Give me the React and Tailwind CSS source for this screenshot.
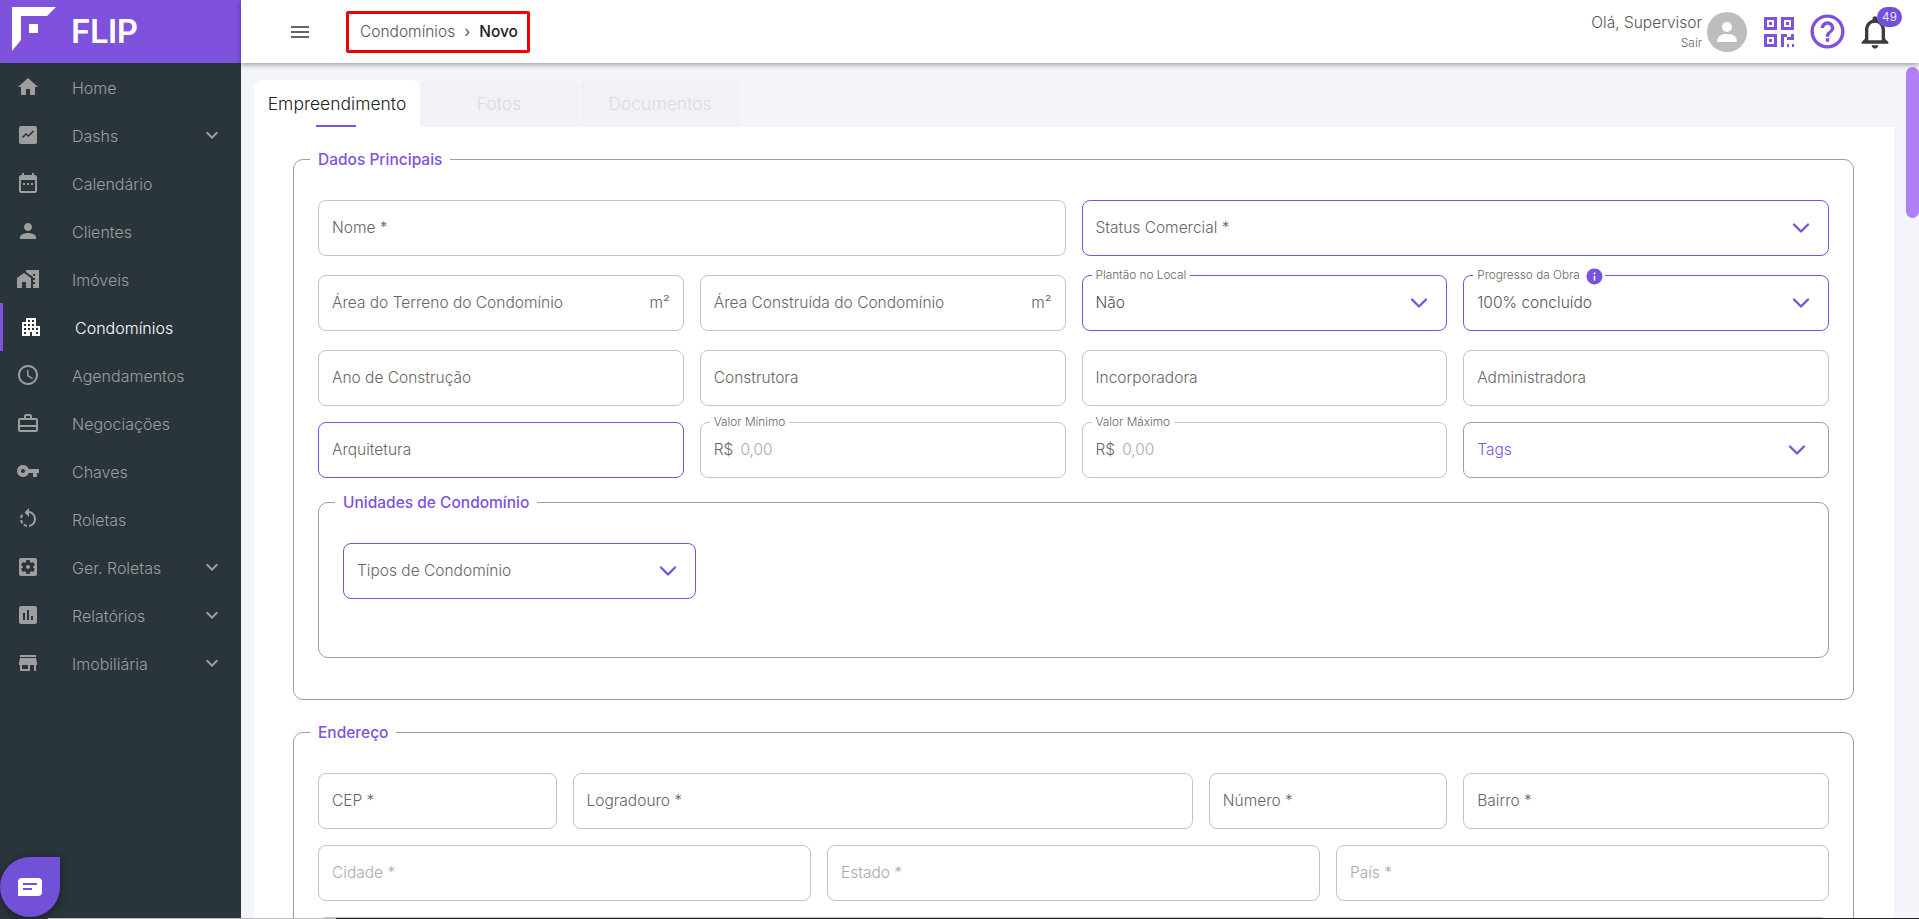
import {
  MdHome,
  MdPerson,
  MdHomeWork,
  MdApartment,
  MdOutlineAccessTime,
  MdVpnKey,
  MdRotateLeft,
  MdSettingsApplications,
  MdAssessment,
  MdStore,
  MdKeyboardArrowDown,
  MdMenu,
  MdHelpOutline,
  MdOutlineNotifications,
  MdInfo,
} from "react-icons/md";
import { ChevronDown } from "lucide-react";

function DashIcon() {
  return (
    <svg width="24" height="24" viewBox="0 0 24 24">
      <rect x="3" y="3" width="18" height="18" rx="2" fill="#9e9e9e" />
      <path d="M6.5 14.5l3.5-3.5 2.5 2 5-5" fill="none" stroke="#29343b" strokeWidth="1.6" />
    </svg>
  );
}

function CalendarIcon() {
  return (
    <svg width="24" height="24" viewBox="0 0 24 24">
      <path
        d="M19 4h-1V2h-2v2H8V2H6v2H5a2 2 0 0 0-2 2v14a2 2 0 0 0 2 2h14a2 2 0 0 0 2-2V6a2 2 0 0 0-2-2zm0 16H5V9h14v11z"
        fill="#9e9e9e"
      />
      <path d="M7 12h2v2H7zM11 12h2v2h-2zM15 12h2v2h-2z" fill="#9e9e9e" />
    </svg>
  );
}

function CaseIcon() {
  return (
    <svg width="24" height="24" viewBox="0 0 24 24" fill="#9e9e9e">
      <path d="M20 7h-4V5a2 2 0 0 0-2-2h-4a2 2 0 0 0-2 2v2H4a2 2 0 0 0-2 2v10a2 2 0 0 0 2 2h16a2 2 0 0 0 2-2V9a2 2 0 0 0-2-2zM10 5h4v2h-4V5zM4 9h16v5H4V9zm0 10v-3h16v3H4z" />
    </svg>
  );
}

function QrIcon() {
  return (
    <svg width="30" height="30" viewBox="0 0 30 30" fill="#7e52dd">
      <path d="M0 0h13v13H0zM3 3v7h7V3zM5 5h3v3H5z" fillRule="evenodd" />
      <path d="M17 0h13v13H17zM20 3v7h7V3zM22 5h3v3h-3z" fillRule="evenodd" />
      <path d="M0 17h13v13H0zM3 20v7h7v-7zM5 22h3v3H5z" fillRule="evenodd" />
      <path d="M17 17h6v3h-3v10h-3zM27 17h3v6h-7v-3h4zM23 27h2v3h-2zM28 27h2v3h-2z" />
    </svg>
  );
}

const navItems = [
  { label: "Home", icon: <MdHome size={24} /> },
  { label: "Dashs", icon: <DashIcon />, arrow: true },
  { label: "Calendário", icon: <CalendarIcon /> },
  { label: "Clientes", icon: <MdPerson size={24} /> },
  { label: "Imóveis", icon: <MdHomeWork size={24} /> },
  { label: "Condomínios", icon: <MdApartment size={24} />, active: true },
  { label: "Agendamentos", icon: <MdOutlineAccessTime size={24} /> },
  { label: "Negociações", icon: <CaseIcon /> },
  { label: "Chaves", icon: <MdVpnKey size={24} /> },
  { label: "Roletas", icon: <MdRotateLeft size={24} /> },
  { label: "Ger. Roletas", icon: <MdSettingsApplications size={24} />, arrow: true },
  { label: "Relatórios", icon: <MdAssessment size={24} />, arrow: true },
  { label: "Imobiliária", icon: <MdStore size={24} />, arrow: true },
];

function Sidebar() {
  return (
    <aside className="flex h-full w-[241px] shrink-0 flex-col bg-[#29343b]">
      <div className="flex h-[63px] shrink-0 items-center bg-[#7e52dd]">
        <svg width="60" height="63" viewBox="0 0 60 63" className="shrink-0">
          <path d="M12 7h44l-9 9H21v24l-9 11z" fill="#fff" />
          <rect x="29" y="24" width="9" height="9" fill="#fff" />
        </svg>
        <span className="ml-[11px] text-[33px] font-semibold leading-none tracking-[-0.5px] text-white">FLIP</span>
      </div>
      <nav className="flex flex-col">
        {navItems.map((item) => (
          <div
            key={item.label}
            className={
              item.active
                ? "flex h-12 items-center gap-8 border-l-[3px] border-[#7e52dd] pl-4 text-white"
                : "flex h-12 items-center gap-8 pl-4 text-[#9e9e9e]"
            }
          >
            <span className="flex w-6 shrink-0 justify-center">{item.icon}</span>
            <span className="pt-[2px] text-[16px] font-light">{item.label}</span>
            {item.arrow && <MdKeyboardArrowDown size={24} className="ml-auto mr-[17px]" />}
          </div>
        ))}
      </nav>
    </aside>
  );
}

function Topbar() {
  return (
    <header className="relative z-10 flex h-[63px] shrink-0 items-center bg-white pl-[47px] pr-6 shadow-[0_2px_5px_rgba(0,0,0,0.35)]">
      <MdMenu size={24} className="text-[#666]" />
      <div className="ml-[34px] flex h-[42px] w-[184px] items-center rounded-[2px] border-[3px] border-[#f00000] pl-[11px] text-[15.5px]">
        <span className="font-light text-[#555]">Condomínios</span>
        <span className="ml-[9px] text-[#555]">›</span>
        <span className="ml-[9px] font-medium text-[#222]">Novo</span>
      </div>
      <div className="ml-auto flex items-center">
        <div className="mr-[5px] flex flex-col items-end">
          <span className="text-[15.5px] font-light leading-5 text-[#555]">Olá, Supervisor</span>
          <span className="mt-[2px] text-xs font-light leading-4 text-[#666]">Sair</span>
        </div>
        <div className="flex h-10 w-10 flex-col items-center justify-center rounded-full bg-[#bdbdbd]">
          <span className="h-[10px] w-[10px] rounded-full bg-white" />
          <span className="mt-[2px] h-[8px] w-5 rounded-t-full rounded-b-sm bg-white" />
        </div>
        <span className="ml-[17px]">
          <QrIcon />
        </span>
        <MdHelpOutline size={41} className="ml-[13px] text-[#7e52dd]" />
        <div className="relative ml-[7px]">
          <MdOutlineNotifications size={40} className="text-[#3c3c3c]" />
          <span className="absolute -right-[7px] -top-[5px] flex h-5 w-[25px] items-center justify-center rounded-full bg-[#7350d8] text-xs font-light text-white">
            49
          </span>
        </div>
      </div>
    </header>
  );
}

function Field({ label, span = "col-span-3", active, placeholder, suffix, arrow, floating, prefix, info, value, tags, wrapCls = "" }) {
  const border = active ? "border-[#7652dd]" : tags ? "border-[#9e9e9e]" : "border-[#c4c4c4]";
  return (
    <div className={`relative flex h-14 items-center rounded-lg border bg-white pl-[13px] pr-[13px] text-[15.5px] font-light ${border} ${span} ${wrapCls}`}>
      {floating && (
        <span className="absolute -top-[8px] left-[9px] flex h-4 items-center gap-[5px] bg-white px-[4px] text-[11.8px] text-[#666]">
          {floating}
          {info && <MdInfo size={19} className="-mr-[3px] text-[#7652dd]" />}
        </span>
      )}
      {prefix && <span className="mr-[7px] text-[#666]">{prefix}</span>}
      {value && <span className="text-[#555]">{value}</span>}
      {label && (
        <span className={tags ? "text-[#7e52dd]" : placeholder ? "text-[#aaa]" : "text-[#666]"}>{label}</span>
      )}
      {suffix && <span className="ml-auto text-[#666]">{suffix}</span>}
      {arrow && (
        <ChevronDown size={28} strokeWidth={2} className={tags ? "ml-auto mr-[4px] text-[#7652dd]" : "ml-auto text-[#7652dd]"} />
      )}
    </div>
  );
}

function Group({ title, className = "", bodyCls = "", children }) {
  return (
    <fieldset className={`rounded-[10px] border border-[#9e9e9e] ${className}`}>
      <legend className="ml-4 px-2 pt-[2px] text-[15.5px] font-medium leading-[22px] text-[#7e52dd]">{title}</legend>
      <div className={bodyCls}>{children}</div>
    </fieldset>
  );
}

function MainForm() {
  return (
    <div className="bg-white pl-[39px] pr-[40px] pt-5">
      <Group title="Dados Principais" bodyCls="px-6 pt-[29px] pb-[41px]">
        <div className="grid grid-cols-12 gap-x-4 gap-y-[19px]">
          <Field label="Nome *" span="col-span-6" />
          <Field label="Status Comercial *" span="col-span-6" active arrow />
          <Field label="Área do Terreno do Condomínio" suffix="m²" />
          <Field label="Área Construída do Condomínio" suffix="m²" />
          <Field floating="Plantão no Local" value="Não" active arrow />
          <Field floating="Progresso da Obra" info value="100% concluído" active arrow />
          <Field label="Ano de Construção" />
          <Field label="Construtora" />
          <Field label="Incorporadora" />
          <Field label="Administradora" />
          <Field label="Arquitetura" active wrapCls="-mt-[3px]" />
          <Field floating="Valor Mínimo" prefix="R$" label="0,00" placeholder wrapCls="-mt-[3px]" />
          <Field floating="Valor Máximo" prefix="R$" label="0,00" placeholder wrapCls="-mt-[3px]" />
          <Field label="Tags" tags arrow wrapCls="-mt-[3px]" />
        </div>
        <Group title="Unidades de Condomínio" className="mt-3" bodyCls="px-6 pt-[29px] pb-[58px]">
          <div className="w-[353px]">
            <Field label="Tipos de Condomínio" span="" active arrow />
          </div>
        </Group>
      </Group>
      <Group title="Endereço" className="mt-5" bodyCls="px-6 pt-[29px]">
        <div className="grid grid-cols-12 gap-x-4 gap-y-4">
          <Field label="CEP *" span="col-span-2" />
          <Field label="Logradouro *" span="col-span-5" />
          <Field label="Número *" span="col-span-2" />
          <Field label="Bairro *" span="col-span-3" />
          <Field label="Cidade *" span="col-span-4" placeholder />
          <Field label="Estado *" span="col-span-4" placeholder />
          <Field label="País *" span="col-span-4" placeholder />
          <div className="col-span-12 h-14 rounded-lg border border-[#c4c4c4]" />
        </div>
      </Group>
    </div>
  );
}

export default function App() {
  return (
    <div className="relative flex h-screen overflow-hidden bg-[#f4f4fb] font-['Inter',sans-serif]">
      <Sidebar />
      <main className="flex min-w-0 flex-1 flex-col">
        <Topbar />
        <div className="min-h-0 flex-1 overflow-hidden pl-[13px] pr-[25px] pt-[17px]">
          <div className="flex h-[47px]">
            <div className="relative flex w-[166px] justify-center rounded-t-lg bg-white pt-[11px] text-[17.5px] font-light text-[#222]">
              Empreendimento
              <span className="absolute bottom-0 left-[62px] h-[2px] w-10 bg-[#7e52dd]" />
            </div>
            <div className="flex w-[158px] justify-center rounded-t-lg bg-[#f1f1f6] pt-[11px] text-[17.5px] font-light text-[#dcdcdc]">
              Fotos
            </div>
            <div className="ml-[2px] flex w-[160px] justify-center rounded-t-lg bg-[#f1f1f6] pt-[11px] text-[17.5px] font-light text-[#dcdcdc]">
              Documentos
            </div>
          </div>
          <MainForm />
        </div>
      </main>

      {/* page scrollbar thumb */}
      <div className="absolute right-0 top-[67px] h-[151px] w-[13px] rounded-full bg-[#b080f8]" />

      {/* chat button */}
      <div className="absolute bottom-[2px] left-0 flex h-[60px] w-[60px] items-center justify-center rounded-full rounded-tr-md bg-[#7350d8] shadow-[0_2px_8px_rgba(0,0,0,0.4)]">
        <svg width="24" height="18" viewBox="0 0 24 18">
          <path d="M4 0h16a4 4 0 0 1 4 4v10a4 4 0 0 1-4 4H0V4a4 4 0 0 1 4-4z" fill="#fff" />
          <path d="M5 6h14M5 11h9" stroke="#7350d8" strokeWidth="2" />
        </svg>
      </div>

      {/* strip along the bottom edge */}
      <div className="absolute bottom-0 left-12 right-0 flex h-px">
        <div className="w-[288px] bg-[#bbb]" />
        <div className="flex-1 bg-[#222]" />
      </div>
    </div>
  );
}
